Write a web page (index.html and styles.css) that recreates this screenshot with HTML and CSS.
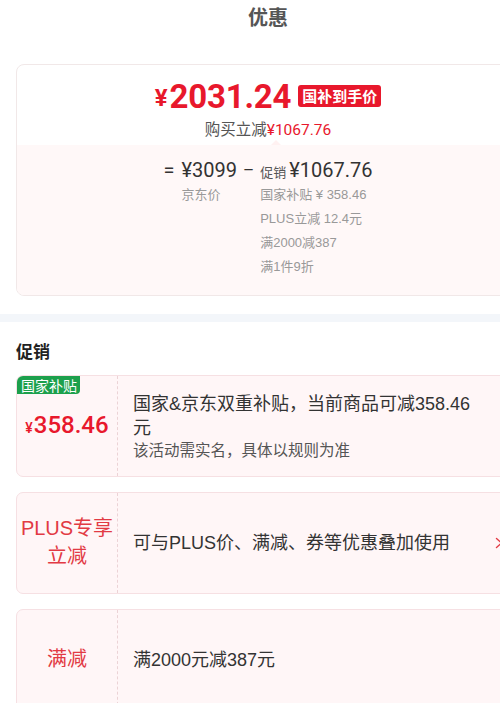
FILE: index.html
```html
<!DOCTYPE html>
<html lang="zh-CN">
<head>
<meta charset="utf-8">
<title>优惠</title>
<link rel="stylesheet" href="styles.css">
</head>
<body>
<div class="viewport">
<div class="page">
  <header class="title">优惠</header>

  <section class="summary">
    <div class="summary-top">
      <div class="final">
        <span class="final-yen">¥</span><span class="final-num">2031.24</span><span class="final-tag">国补到手价</span>
      </div>
      <div class="saving">购买立减<span class="saving-num">¥1067.76</span></div>
    </div>
    <div class="summary-detail">
      <span class="notch"></span>
      <div class="formula">
        <span class="op">=</span>
        <div class="fcol">
          <div class="fval"><span class="num">¥3099</span></div>
          <div class="fitem">京东价</div>
        </div>
        <span class="op op-minus">–</span>
        <div class="fcol">
          <div class="fval"><span class="fsmall">促销</span><span class="num">¥1067.76</span></div>
          <div class="fitem">国家补贴 ¥ 358.46</div>
          <div class="fitem">PLUS立减 12.4元</div>
          <div class="fitem">满2000减387</div>
          <div class="fitem">满1件9折</div>
        </div>
      </div>
    </div>
  </section>

  <div class="band"></div>

  <h2 class="section-title">促销</h2>

  <div class="promo-list">
    <div class="promo">
      <div class="promo-side">
        <span class="promo-badge">国家补贴</span>
        <span class="promo-price"><span class="promo-yen">¥</span>358.46</span>
      </div>
      <div class="promo-body">
        <div class="promo-text">
          <div class="promo-main">国家&amp;京东双重补贴，当前商品可减358.46元</div>
          <div class="promo-sub">该活动需实名，具体以规则为准</div>
        </div>
      </div>
    </div>

    <div class="promo">
      <div class="promo-side">
        <span class="promo-label">PLUS专享<br>立减</span>
      </div>
      <div class="promo-body">
        <div class="promo-text">
          <div class="promo-main">可与PLUS价、满减、券等优惠叠加使用</div>
        </div>
        <svg class="chev" width="8" height="12" viewBox="0 0 8 12"><path d="M1.5 1.5 L6.5 6 L1.5 10.5" fill="none" stroke="#e23a44" stroke-width="1.4" stroke-linecap="round" stroke-linejoin="round"/></svg>
      </div>
    </div>

    <div class="promo">
      <div class="promo-side">
        <span class="promo-label">满减</span>
      </div>
      <div class="promo-body">
        <div class="promo-text">
          <div class="promo-main">满2000元减387元</div>
        </div>
      </div>
    </div>
  </div>
</div>
</div>
</body>
</html>
```

FILE: styles.css
```css
* { box-sizing: border-box; }

html, body {
  margin: 0;
  padding: 0;
  background: #fff;
}

body {
  font-family: "Liberation Sans", "Noto Sans CJK SC", sans-serif;
  color: #333;
}

.viewport {
  width: 500px;
  height: 703px;
  overflow: hidden;
}

.page {
  width: 536px;
}

.title {
  height: 34px;
  line-height: 34px;
  text-align: center;
  font-size: 20px;
  font-weight: 700;
  color: #555;
  font-family: "Noto Sans CJK SC", sans-serif;
}

/* summary card */
.summary {
  margin: 30px 16px 0;
  border: 1px solid #f1e8e8;
  border-radius: 8px;
  overflow: hidden;
  background: #fff;
}

.summary-top {
  height: 80px;
  padding-top: 13px;
  display: flex;
  flex-direction: column;
  align-items: center;
}

.final {
  display: flex;
  align-items: center;
  height: 36px;
  color: #e8182c;
  font-family: Roboto, "Noto Sans CJK SC", sans-serif;
}

.final-yen {
  font-size: 24px;
  font-weight: 700;
  margin-right: 2px;
  margin-top: 4px;
}

.final-num {
  font-size: 33px;
  font-weight: 700;
  letter-spacing: -0.2px;
}

.final-tag {
  margin-left: 7px;
  background: #e8182c;
  color: #fff;
  font-family: "Noto Sans CJK SC", sans-serif;
  font-size: 15px;
  font-weight: 700;
  height: 22px;
  line-height: 22px;
  padding: 0 4px;
  border-radius: 3px;
}

.saving {
  margin-top: 3px;
  line-height: 22px;
  font-size: 15.5px;
  color: #555;
  font-family: "Noto Sans CJK SC", sans-serif;
}

.saving-num {
  color: #e8182c;
  font-family: Roboto, sans-serif;
}

.summary-detail {
  position: relative;
  background: #fff8f8;
  padding: 12px 0 16px;
}

.notch {
  position: absolute;
  left: 254px;
  top: -5px;
  width: 0;
  height: 0;
  border-left: 5px solid transparent;
  border-right: 5px solid transparent;
  border-bottom: 5px solid #fff1f1;
}

.formula {
  display: flex;
  justify-content: center;
  align-items: flex-start;
  padding-left: 0;
}

.op {
  font-family: Roboto, sans-serif;
  font-size: 20px;
  line-height: 26px;
  color: #333;
}

.op:first-child { margin-right: 7px; }
.op-minus { margin: 0 6px; font-size: 17px; }

.fcol {
  display: flex;
  flex-direction: column;
}

.fval {
  line-height: 26px;
  height: 26px;
  white-space: nowrap;
}

.fval .num {
  font-family: Roboto, sans-serif;
  font-size: 20px;
  color: #333;
}

.fsmall {
  font-family: "Noto Sans CJK SC", sans-serif;
  font-size: 13px;
  color: #555;
  margin-right: 3px;
}

.fitem {
  font-size: 13px;
  line-height: 24px;
  color: #999;
  white-space: nowrap;
}

.band {
  margin-top: 18px;
  height: 8px;
  background: #f3f6fa;
}

.section-title {
  margin: 17px 0 12px 16px;
  font-size: 17px;
  line-height: 24px;
  font-weight: 600;
  color: #222;
  font-family: "Noto Sans CJK SC", sans-serif;
}

/* promotions */
.promo-list {
  display: flex;
  flex-direction: column;
  gap: 15px;
  padding: 0 16px;
}

.promo {
  display: flex;
  min-height: 102px;
  background: #fff6f7;
  border: 1px solid #f6e0e3;
  border-radius: 7px;
  overflow: hidden;
}

.promo-side {
  position: relative;
  flex: 0 0 101px;
  border-right: 1px dashed #ecd3d6;
  display: flex;
  align-items: center;
  justify-content: center;
  text-align: center;
}

.promo-badge {
  position: absolute;
  left: 0;
  top: 0;
  background: #1ca04c;
  color: #fff;
  font-family: "Noto Sans CJK SC", sans-serif;
  font-size: 14px;
  line-height: 18px;
  padding: 0 3px 0 4px;
  border-bottom-right-radius: 4px;
}

.promo-price {
  color: #e8182c;
  font-family: Roboto, sans-serif;
  font-size: 24px;
  font-weight: 500;
  margin-top: -2px;
}

.promo-yen {
  font-size: 14px;
  margin-right: 1px;
}

.promo-label {
  color: #e23a44;
  font-size: 20px;
  line-height: 28px;
  margin-top: -2px;
}

.promo-body {
  flex: 1;
  display: flex;
  align-items: center;
  padding: 0 16px 0 15px;
}

.promo-text {
  flex: 1;
  margin-right: 22px;
}

.promo-main {
  font-size: 18px;
  line-height: 24px;
  color: #333;
}

.promo-sub {
  font-size: 15.5px;
  line-height: 21px;
  color: #555;
}

.chev {
  flex: 0 0 8px;
  display: block;
}
```
